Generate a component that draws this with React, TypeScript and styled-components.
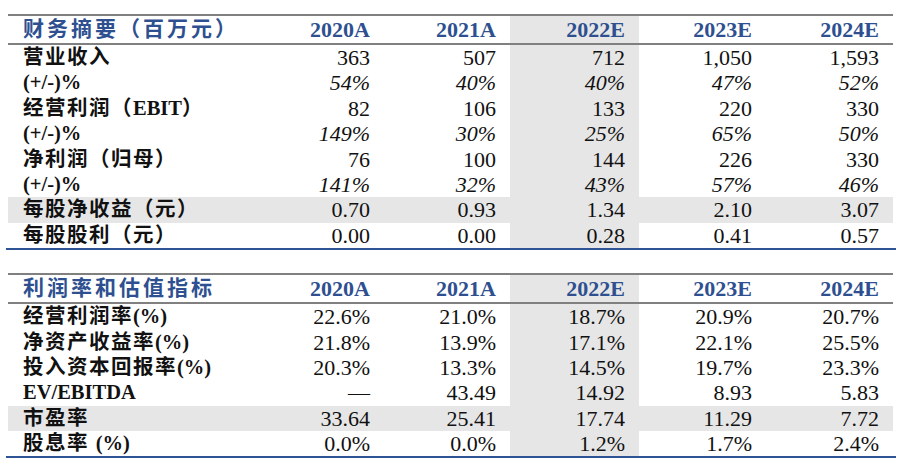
import React from "react";
import styled, { createGlobalStyle } from "styled-components";

const Global = createGlobalStyle`
  html, body { margin: 0; padding: 0; background: #fff; }
  body { font-family: "Liberation Serif", "Noto Sans CJK SC", serif; }
`;

const Page = styled.div`
  width: 898px;
  height: 469px;
  padding: 14px 0 0 8px;
  box-sizing: border-box;
  display: flex;
  flex-direction: column;
`;

const Table = styled.div<{ $gapTop?: number }>`
  width: 885px;
  margin-top: ${(p) => p.$gapTop ?? 0}px;
  display: grid;
  grid-template-columns: 250px 126px 126px 129px 127px 127px;
  border-top: 2px solid #808080;
`;

const HeadRow = styled.div`
  display: contents;
`;

const HeadLabel = styled.div`
  height: 27px;
  line-height: 27px;
  border-bottom: 2px solid #808080;
  padding-left: 15px;
  font-family: "Liberation Serif", "Noto Sans CJK SC", serif;
  font-weight: 700;
  font-size: 21px;
  letter-spacing: 3px;
  color: #2e5090;
  white-space: nowrap;
`;

const HeadYear = styled.div<{ $shade?: boolean }>`
  height: 27px;
  line-height: 27px;
  border-bottom: 2px solid #808080;
  background: ${(p) => (p.$shade ? "#e6e6e6" : "transparent")};
  text-align: right;
  padding-right: 14px;
  font-family: "Liberation Serif", serif;
  font-weight: 700;
  font-size: 22px;
  color: #2e5090;
`;

const Label = styled.div<{ $shade?: boolean }>`
  height: 25.4px;
  line-height: 25.4px;
  padding-left: 15px;
  background: ${(p) => (p.$shade ? "#e6e6e6" : "transparent")};
  font-family: "Liberation Serif", "Noto Sans CJK SC", serif;
  font-weight: 700;
  font-size: 20.5px;
  letter-spacing: 1.5px;
  color: #111;
  white-space: nowrap;
`;

const Latin = styled.span`
  letter-spacing: 0;
`;

const Value = styled.div<{ $shade?: boolean; $italic?: boolean }>`
  height: 25.4px;
  line-height: 25.4px;
  text-align: right;
  padding-right: 14px;
  background: ${(p) => (p.$shade ? "#e6e6e6" : "transparent")};
  font-family: "Liberation Serif", serif;
  font-size: 22px;
  font-style: ${(p) => (p.$italic ? "italic" : "normal")};
  color: #111;
  white-space: nowrap;
`;

const BlueRule = styled.div`
  width: 890px;
  height: 2px;
  margin-left: -2px;
  background: #2f5496;
`;

type Row = {
  label: React.ReactNode;
  values: string[];
  italic?: boolean;
  shade?: boolean;
};

const years = ["2020A", "2021A", "2022E", "2023E", "2024E"];
const SHADE_COL = 2;

const L = ({ children }: { children: React.ReactNode }) => <Latin>{children}</Latin>;

const summary: Row[] = [
  { label: "营业收入", values: ["363", "507", "712", "1,050", "1,593"] },
  { label: <L>(+/-)%</L>, values: ["54%", "40%", "40%", "47%", "52%"], italic: true },
  { label: <>经营利润（<L>EBIT</L>）</>, values: ["82", "106", "133", "220", "330"] },
  { label: <L>(+/-)%</L>, values: ["149%", "30%", "25%", "65%", "50%"], italic: true },
  { label: "净利润（归母）", values: ["76", "100", "144", "226", "330"] },
  { label: <L>(+/-)%</L>, values: ["141%", "32%", "43%", "57%", "46%"], italic: true },
  { label: "每股净收益（元）", values: ["0.70", "0.93", "1.34", "2.10", "3.07"], shade: true },
  { label: "每股股利（元）", values: ["0.00", "0.00", "0.28", "0.41", "0.57"] },
];

const ratios: Row[] = [
  { label: <>经营利润率<L>(%)</L></>, values: ["22.6%", "21.0%", "18.7%", "20.9%", "20.7%"] },
  { label: <>净资产收益率<L>(%)</L></>, values: ["21.8%", "13.9%", "17.1%", "22.1%", "25.5%"] },
  { label: <>投入资本回报率<L>(%)</L></>, values: ["20.3%", "13.3%", "14.5%", "19.7%", "23.3%"] },
  { label: <L>EV/EBITDA</L>, values: ["—", "43.49", "14.92", "8.93", "5.83"] },
  { label: "市盈率", values: ["33.64", "25.41", "17.74", "11.29", "7.72"], shade: true },
  { label: <>股息率 <L>(%)</L></>, values: ["0.0%", "0.0%", "1.2%", "1.7%", "2.4%"] },
];

function DataTable({ title, rows, gapTop }: { title: string; rows: Row[]; gapTop?: number }) {
  return (
    <>
      <Table $gapTop={gapTop}>
        <HeadRow>
          <HeadLabel>{title}</HeadLabel>
          {years.map((y, i) => (
            <HeadYear key={y} $shade={i === SHADE_COL}>
              {y}
            </HeadYear>
          ))}
        </HeadRow>
        {rows.map((r, ri) => (
          <React.Fragment key={ri}>
            <Label $shade={r.shade}>{r.label}</Label>
            {r.values.map((v, ci) => (
              <Value key={ci} $shade={r.shade || ci === SHADE_COL} $italic={r.italic}>
                {v}
              </Value>
            ))}
          </React.Fragment>
        ))}
      </Table>
      <BlueRule />
    </>
  );
}

export default function App() {
  return (
    <>
      <Global />
      <Page>
        <DataTable title="财务摘要（百万元）" rows={summary} />
        <DataTable title="利润率和估值指标" rows={ratios} gapTop={23} />
      </Page>
    </>
  );
}
